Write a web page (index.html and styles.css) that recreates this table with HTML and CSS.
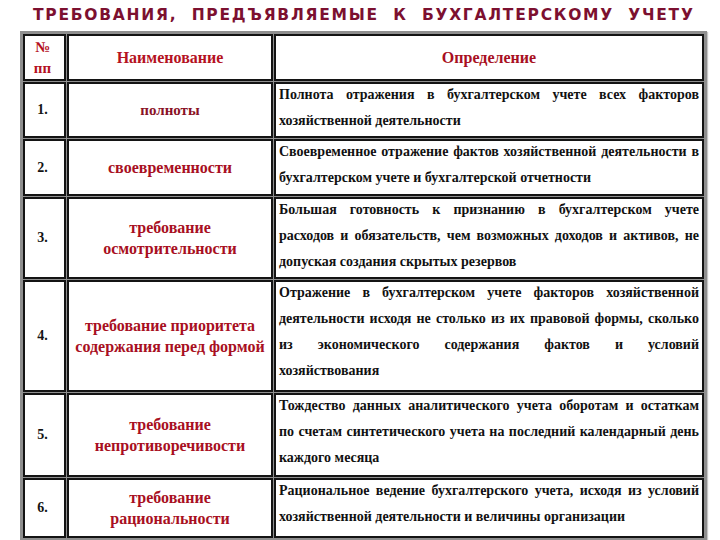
FILE: index.html
```html
<!DOCTYPE html>
<html lang="ru">
<head>
<meta charset="utf-8">
<link rel="stylesheet" href="styles.css">
</head>
<body>
<h1 class="title">ТРЕБОВАНИЯ,  ПРЕДЪЯВЛЯЕМЫЕ  К  БУХГАЛТЕРСКОМУ  УЧЕТУ</h1>
<table class="grid">
  <colgroup><col class="c-num"><col class="c-name"><col class="c-def"></colgroup>
  <tr class="r-head">
    <td class="num head">№<br>пп</td>
    <td class="name head">Наименование</td>
    <td class="head-def">Определение</td>
  </tr>
  <tr class="r1">
    <td class="num">1.</td>
    <td class="name"><span class="dark">полноты</span></td>
    <td class="def"><div class="lines"><div class="j">Полнота отражения в бухгалтерском учете всех факторов</div><div>хозяйственной деятельности</div></div></td>
  </tr>
  <tr class="r2">
    <td class="num">2.</td>
    <td class="name">своевременности</td>
    <td class="def"><div class="lines"><div class="j">Своевременное отражение фактов хозяйственной деятельности в</div><div>бухгалтерском учете и бухгалтерской отчетности</div></div></td>
  </tr>
  <tr class="r3">
    <td class="num">3.</td>
    <td class="name">требование<br>осмотрительности</td>
    <td class="def"><div class="lines"><div class="j">Большая готовность к признанию в бухгалтерском учете</div><div class="j">расходов и обязательств, чем возможных доходов и активов, не</div><div>допуская создания скрытых резервов</div></div></td>
  </tr>
  <tr class="r4">
    <td class="num">4.</td>
    <td class="name">требование приоритета<br>содержания перед формой</td>
    <td class="def"><div class="lines"><div class="j">Отражение в бухгалтерском учете факторов хозяйственной</div><div class="j">деятельности исходя не столько из их правовой формы, сколько</div><div class="j">из экономического содержания фактов и условий</div><div>хозяйствования</div></div></td>
  </tr>
  <tr class="r5">
    <td class="num">5.</td>
    <td class="name">требование<br>непротиворечивости</td>
    <td class="def"><div class="lines"><div class="j">Тождество данных аналитического учета оборотам и остаткам</div><div class="j">по счетам синтетического учета на последний календарный день</div><div>каждого месяца</div></div></td>
  </tr>
  <tr class="r6">
    <td class="num">6.</td>
    <td class="name">требование<br>рациональности</td>
    <td class="def"><div class="lines"><div class="j">Рациональное ведение бухгалтерского учета, исходя из условий</div><div>хозяйственной деятельности и величины организации</div></div></td>
  </tr>
</table>
</body>
</html>
```

FILE: styles.css
```css
html, body {
  margin: 0;
  padding: 0;
  background: #ffffff;
}
body {
  width: 720px;
  height: 540px;
  overflow: hidden;
}
.title {
  margin: 0;
  height: 31px;
  padding: 6px 0 0 33px;
  box-sizing: border-box;
  font-family: "DejaVu Sans", "Liberation Sans", sans-serif;
  font-weight: bold;
  font-size: 15.5px;
  letter-spacing: 1.75px;
  white-space: pre;
  color: #7c1030;
  line-height: 18px;
}
.grid {
  margin-left: 20px;
  width: 687px;
  table-layout: fixed;
  border-collapse: separate;
  border-spacing: 1px;
  border: 2px solid #8f8f8f;
  background: #8f8f8f;
  box-shadow: 1px 1px 1px #c8c8c8;
}
.c-num { width: 43px; }
.c-name { width: 206px; }
.grid td {
  background: #ffffff;
  border: 2px solid #141414;
  padding: 0;
  font-family: "Liberation Serif", "Times New Roman", serif;
  font-weight: bold;
}
.num {
  text-align: center;
  vertical-align: middle;
  font-size: 14px;
  color: #141414;
}
.grid td.num { padding-right: 4px; }
.num.head {
  color: #b5121f;
  font-size: 15px;
  line-height: 21px;
}
.name {
  text-align: center;
  vertical-align: middle;
  font-size: 16px;
  line-height: 21px;
  color: #a80f22;
}
.head { color: #b5121f; }
.dark { color: #8a1226; font-size: 15px; }
.head-def {
  text-align: center;
  vertical-align: middle;
  font-size: 16px;
  color: #a80f22;
}
.def {
  vertical-align: top;
  font-size: 14px;
  line-height: 26px;
  color: #111111;
}
.grid td.def { padding: 0 3px 0 3px; }
.lines { margin-top: -2px; }
.j {
  text-align: justify;
  text-align-last: justify;
}
.r-head { height: 47px; }
.r1 { height: 56px; }
.r2 { height: 57px; }
.r3 { height: 82px; }
.r4 { height: 112px; }
.r5 { height: 84px; }
.r6 { height: 60px; }
```
